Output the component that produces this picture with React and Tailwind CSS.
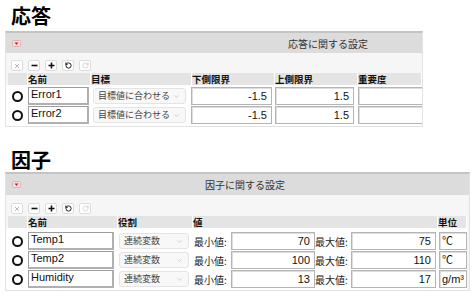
import React from "react";
import { RotateCcw, RotateCw, ChevronDown } from "lucide-react";

function Toggle() {
  return (
    <svg width="9" height="7" viewBox="0 0 9 7" className="ml-[6px] shrink-0">
      <rect x="0.5" y="0.5" width="8" height="6" rx="1" fill="#f6dede" stroke="#e0b4b4" />
      <path d="M2.5 2.5 L6.5 2.5 L4.5 5 Z" fill="#d11f1f" />
    </svg>
  );
}

function Btn({ children }) {
  return (
    <div className="w-[12px] h-[11px] rounded-[2px] border border-[#dcdcdc] bg-white flex items-center justify-center">
      {children}
    </div>
  );
}

function Toolbar() {
  return (
    <div className="flex items-center gap-[5px] pl-[5px] h-[11px]">
      <Btn>
        <svg width="6" height="6" viewBox="0 0 6 6"><path d="M1 1 L5 5 M5 1 L1 5" stroke="#b8b8b8" strokeWidth="1" /></svg>
      </Btn>
      <Btn>
        <svg width="7" height="7" viewBox="0 0 7 7"><path d="M0.5 3.5 H6.5" stroke="#111" strokeWidth="1.6" /></svg>
      </Btn>
      <Btn>
        <svg width="7" height="7" viewBox="0 0 7 7"><path d="M0.5 3.5 H6.5 M3.5 0.5 V6.5" stroke="#111" strokeWidth="1.6" /></svg>
      </Btn>
      <Btn>
        <RotateCcw size={7} strokeWidth={3.2} color="#111" />
      </Btn>
      <Btn>
        <RotateCw size={7} strokeWidth={2} color="#c0c0c0" />
      </Btn>
    </div>
  );
}

function Radio() {
  return (
    <div className="w-[22px] shrink-0 flex items-center justify-center">
      <div className="w-[11px] h-[11px] rounded-full border-[2px] border-[#111]" />
    </div>
  );
}

function NameInput({ w, children }) {
  return (
    <div
      className={`${w} shrink-0 h-full border border-[#9c9c9c] border-b-[2px] border-r-[2px] border-b-[#b0b0b0] border-r-[#b0b0b0] bg-white pl-[2px] text-[11px] leading-[13px] text-[#111] font-['Liberation_Sans',sans-serif]`}
    >
      {children}
    </div>
  );
}

function Select({ w, children }) {
  return (
    <div
      className={`${w} shrink-0 h-[16px] self-center rounded-[3px] border border-[#e4e4e4] bg-[#f8f8f8] flex items-center justify-between pl-[4px] pr-[5px] text-[9px] text-[#444] font-['Noto_Sans_CJK_JP',sans-serif]`}
    >
      <span>{children}</span>
      <ChevronDown size={7} strokeWidth={1.5} color="#999" />
    </div>
  );
}

function NumInput({ w, children, left }) {
  return (
    <div
      className={`${w} shrink-0 h-full border border-[#b4b4b4] shadow-[inset_1px_1px_0_#dedede] bg-white flex items-center ${left ? "justify-start pl-[2px]" : "justify-end pr-[4px]"} text-[11px] text-[#111] font-['Liberation_Sans','Noto_Sans_CJK_JP',sans-serif]`}
    >
      {children}
    </div>
  );
}

function Label({ w, children }) {
  return (
    <div className={`${w} shrink-0 flex items-center text-[10px] text-[#222] font-['Noto_Sans_CJK_JP',sans-serif]`}>
      {children}
    </div>
  );
}

function HeadCell({ w, children, grow }) {
  return (
    <div className={`${grow ? "flex-1" : w + " shrink-0"} h-full flex items-center text-[9.5px] font-bold text-[#111] font-['Noto_Sans_CJK_JP',sans-serif] border-r border-white`}>
      {children}
    </div>
  );
}

function Title({ children, cls }) {
  return (
    <div className={`${cls} pl-[11px] h-[24px] leading-[24px] text-[20px] font-bold text-black font-['Noto_Sans_CJK_JP',sans-serif]`}>
      {children}
    </div>
  );
}

export default function App() {
  return (
    <div className="w-[476px] h-[296px] bg-white overflow-hidden">
      {/* 応答 */}
      <Title cls="mt-[4px]">応答</Title>
      <div className="mt-[3px] ml-[5px] w-[418px] border-t-[2px] border-t-[#c4c4c4] border-x border-x-[#e2e2e2] border-b border-b-[#e2e2e2] overflow-hidden">
        <div className="h-[20px] bg-[#dcdcdc] flex items-center">
          <Toggle />
          <span className="ml-[267px] text-[10px] text-[#333] font-['Noto_Sans_CJK_JP',sans-serif]">応答に関する設定</span>
        </div>
        <div className="bg-[#f6f6f6] pt-[7px]">
          <Toolbar />
          <div className="mt-[2px] h-[12px] ml-[2px] flex bg-[#e4e4e4]">
            <div className="w-[20px] shrink-0 border-r border-white" />
            <HeadCell w="w-[63px]">名前</HeadCell>
            <HeadCell w="w-[101px]">目標</HeadCell>
            <HeadCell w="w-[83px]">下側限界</HeadCell>
            <HeadCell w="w-[83px]">上側限界</HeadCell>
            <HeadCell grow>重要度</HeadCell>
          </div>
        </div>
        <div className="bg-white pt-[2px] pb-[2px] flex flex-col gap-[1px]">
          {[["Error1", "-1.5", "1.5"], ["Error2", "-1.5", "1.5"]].map((r) => (
            <div key={r[0]} className="h-[18px] flex">
              <Radio />
              <NameInput w="w-[61px]">{r[0]}</NameInput>
              <div className="w-[4px] shrink-0" />
              <Select w="w-[93px]">目標値に合わせる</Select>
              <div className="w-[5px] shrink-0" />
              <NumInput w="w-[81px]">{r[1]}</NumInput>
              <div className="w-[3px] shrink-0" />
              <NumInput w="w-[79px]">{r[2]}</NumInput>
              <div className="w-[4px] shrink-0" />
              <NumInput w="w-[80px]"></NumInput>
            </div>
          ))}
        </div>
      </div>

      {/* 因子 */}
      <Title cls="mt-[21px]">因子</Title>
      <div className="ml-[5px] w-[465px] border-t-[2px] border-t-[#c4c4c4] border-x border-x-[#e2e2e2] border-b border-b-[#e2e2e2] overflow-hidden bg-[#f6f6f6]">
        <div className="h-[21px] bg-[#dcdcdc] flex items-center">
          <Toggle />
          <span className="ml-[184px] text-[10px] text-[#333] font-['Noto_Sans_CJK_JP',sans-serif]">因子に関する設定</span>
        </div>
        <div className="pt-[8px] pr-[2px]">
          <Toolbar />
          <div className="mt-[2px] h-[12px] ml-[2px] flex bg-[#e4e4e4]">
            <div className="w-[20px] shrink-0 border-r border-white" />
            <HeadCell w="w-[90px]">名前</HeadCell>
            <HeadCell w="w-[75px]">役割</HeadCell>
            <HeadCell w="w-[245px]">値</HeadCell>
            <HeadCell grow>単位</HeadCell>
          </div>
          <div className="bg-white pt-[4px] pb-[2px] flex flex-col gap-[1px]">
            {[["Temp1", "70", "75", "℃"], ["Temp2", "100", "110", "℃"], ["Humidity", "13", "17", "g/m³"]].map((r) => (
              <div key={r[0]} className="h-[18px] flex">
                <Radio />
                <NameInput w="w-[86px]">{r[0]}</NameInput>
                <div className="w-[5px] shrink-0" />
                <Select w="w-[70px]">連続変数</Select>
                <div className="w-[5px] shrink-0" />
                <Label w="w-[37px]">最小値:</Label>
                <NumInput w="w-[84px]">{r[1]}</NumInput>
                <Label w="w-[36px]">最大値:</Label>
                <NumInput w="w-[85px]">{r[2]}</NumInput>
                <div className="w-[3px] shrink-0" />
                <NumInput w="w-[28px]" left>{r[3]}</NumInput>
              </div>
            ))}
          </div>
        </div>
      </div>
    </div>
  );
}
